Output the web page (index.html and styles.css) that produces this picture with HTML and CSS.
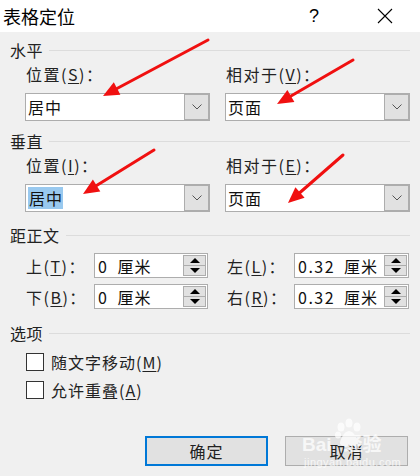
FILE: index.html
```html
<!DOCTYPE html>
<html lang="zh-CN">
<head>
<meta charset="utf-8">
<title>表格定位</title>
<link rel="stylesheet" href="styles.css">
</head>
<body>
<div class="dialog">
  <div class="titlebar">
    <span class="title">表格定位</span>
    <span class="help">?</span>
    <svg class="close" width="16" height="16" viewBox="0 0 16 16"><path d="M1 1L15 15M15 1L1 15" stroke="#000" stroke-width="1.1" fill="none"/></svg>
  </div>
  <div class="content">
    <div class="section-head"><span>水平</span></div>
    <div class="pair">
      <div class="field">
        <div class="label">位置(<u>S</u>)：</div>
        <div class="select"><span class="value">居中</span><span class="select-btn"><svg width="10" height="6" viewBox="0 0 10 6"><path d="M0.5 0.5L5 5L9.5 0.5" stroke="#555" fill="none"/></svg></span></div>
      </div>
      <div class="field">
        <div class="label">相对于(<u>V</u>)：</div>
        <div class="select"><span class="value">页面</span><span class="select-btn"><svg width="10" height="6" viewBox="0 0 10 6"><path d="M0.5 0.5L5 5L9.5 0.5" stroke="#555" fill="none"/></svg></span></div>
      </div>
    </div>
    <div class="section-head sh2"><span>垂直</span></div>
    <div class="pair">
      <div class="field">
        <div class="label">位置(<u>I</u>)：</div>
        <div class="select"><span class="value"><span class="selected">居中</span></span><span class="select-btn"><svg width="10" height="6" viewBox="0 0 10 6"><path d="M0.5 0.5L5 5L9.5 0.5" stroke="#555" fill="none"/></svg></span></div>
      </div>
      <div class="field">
        <div class="label">相对于(<u>E</u>)：</div>
        <div class="select"><span class="value">页面</span><span class="select-btn"><svg width="10" height="6" viewBox="0 0 10 6"><path d="M0.5 0.5L5 5L9.5 0.5" stroke="#555" fill="none"/></svg></span></div>
      </div>
    </div>
    <div class="section-head sh3"><span>距正文</span></div>
    <div class="spin-rows">
      <div class="spin-row">
        <span class="slabel">上(<u>T</u>)：</span>
        <div class="spin l"><span class="value"><span class="num">0</span>厘米</span><span class="spin-btns"><span class="sb"><i class="up"></i></span><span class="sb"><i class="down"></i></span></span></div>
        <span class="slabel r">左(<u>L</u>)：</span>
        <div class="spin r"><span class="value"><span class="num">0.32</span>厘米</span><span class="spin-btns"><span class="sb"><i class="up"></i></span><span class="sb"><i class="down"></i></span></span></div>
      </div>
      <div class="spin-row">
        <span class="slabel">下(<u>B</u>)：</span>
        <div class="spin l"><span class="value"><span class="num">0</span>厘米</span><span class="spin-btns"><span class="sb"><i class="up"></i></span><span class="sb"><i class="down"></i></span></span></div>
        <span class="slabel r">右(<u>R</u>)：</span>
        <div class="spin r"><span class="value"><span class="num">0.32</span>厘米</span><span class="spin-btns"><span class="sb"><i class="up"></i></span><span class="sb"><i class="down"></i></span></span></div>
      </div>
    </div>
    <div class="section-head sh4"><span>选项</span></div>
    <div class="checks">
      <label class="check"><span class="box"></span>随文字移动(<u>M</u>)</label>
      <label class="check"><span class="box"></span>允许重叠(<u>A</u>)</label>
    </div>
    <div class="buttons">
      <span class="btn primary">确定</span>
      <span class="btn">取消</span>
    </div>
  </div>

  <div class="watermark">
    <svg class="paw" width="34" height="30" viewBox="0 0 34 30"><g fill="#fff"><ellipse cx="9" cy="9" rx="3.5" ry="4.5"/><ellipse cx="17" cy="5" rx="3.5" ry="4.5"/><ellipse cx="25" cy="9" rx="3.5" ry="4.5"/><ellipse cx="6" cy="17" rx="3" ry="3.5"/><path d="M17 13c-5 0-9 9-9 12 0 3 4 3 9 3s9 0 9-3c0-3-4-12-9-12z"/></g></svg>
    <span class="wm-big">Bai<span class="wm-gap"></span>经验</span>
    <span class="wm-small">jingyan.baidu.com</span>
  </div>

  <svg class="arrows" width="420" height="476" viewBox="0 0 420 476">
    <g stroke="#f01010" stroke-width="3" stroke-linecap="round" fill="#f01010">
      <line x1="208" y1="40" x2="117" y2="88.5"/>
      <line x1="353" y1="60" x2="291" y2="96"/>
      <line x1="154" y1="150" x2="96.6" y2="185.6"/>
      <line x1="343" y1="155" x2="300" y2="192.5"/>
    </g>
    <g fill="#f01010">
      <polygon points="103,96 113.8,82.3 120.4,94.7"/>
      <polygon points="277,104 287.4,89.9 294.4,102.1"/>
      <polygon points="83,194 92.9,179.6 100.3,191.6"/>
      <polygon points="288,203 295.4,187.2 304.6,197.8"/>
    </g>
  </svg>
</div>
</body>
</html>
```

FILE: styles.css
```css
* { box-sizing: border-box; }
html, body { margin: 0; padding: 0; }
body {
  width: 420px;
  height: 476px;
  overflow: hidden;
  background: #f0f0f0;
  font-family: "Noto Sans CJK SC", "Noto Sans", sans-serif;
  font-size: 16px;
  color: #111;
}
u { text-decoration: underline; text-underline-offset: 2px; }
.dialog { position: relative; width: 420px; height: 476px; }

.titlebar {
  height: 32px;
  background: #fff;
  display: flex;
  align-items: center;
  padding-left: 3px;
}
.title { font-size: 18px; line-height: 20px; color: #000; flex: 1; }
.help { font-size: 18px; line-height: 20px; margin-right: 58px; color: #000; font-family: "Liberation Sans", sans-serif; }
.close { margin-right: 27px; }

.content { padding: 0 10px; }

.section-head {
  height: 20px;
  margin-top: 8px;
  display: flex;
  align-items: center;
  line-height: 20px;
  color: #222;
  letter-spacing: 0.5px;
}
.section-head::after {
  content: "";
  flex: 1;
  height: 1px;
  background: #dcdcdc;
  margin-left: 6px;
}
.sh2 { margin-top: 10px; }
.sh3 { margin-top: 13px; }
.sh4 { margin-top: 14px; }

.pair {
  display: grid;
  grid-template-columns: 185px 185px;
  column-gap: 15px;
  padding-left: 15px;
}
.label { height: 20px; line-height: 20px; margin-top: 4px; padding-left: 1px; color: #222; letter-spacing: 1.5px; }
.select {
  margin-top: 9px;
  height: 28px;
  background: #fff;
  border: 1px solid #adadad;
  display: flex;
  align-items: center;
}
.select .value { flex: 1; padding-left: 2px; line-height: 22px; color: #111; letter-spacing: 1px; }
.selected { background: #99c9ef; display: inline-block; padding: 0 0 0 1px; line-height: 22px; }
.select-btn {
  width: 25px;
  height: 100%;
  background: #e1e1e1;
  border: 1px solid #adadad;
  display: flex;
  align-items: center;
  justify-content: center;
}

.spin-rows { margin-top: 8px; display: flex; flex-direction: column; gap: 6px; }
.spin-row { display: flex; align-items: center; height: 25px; padding-left: 16px; }
.slabel { width: 68px; line-height: 20px; color: #222; letter-spacing: 1.5px; white-space: nowrap; }
.slabel.r { width: 67px; margin-left: 19px; }
.spin {
  height: 25px;
  background: #fff;
  border: 1px solid #adadad;
  display: flex;
  align-items: center;
}
.spin.l { width: 114px; }
.spin.r { width: 115px; }
.spin .value { flex: 1; padding-left: 3px; line-height: 20px; white-space: nowrap; color: #111; letter-spacing: 1px; }
.num { margin-right: 9px; letter-spacing: 1.5px; }
.spin-btns {
  width: 24px;
  height: 100%;
  padding: 1px 1px 1px 0;
  display: flex;
  flex-direction: column;
}
.sb {
  flex: 1;
  background: #e1e1e1;
  border: 1px solid #adadad;
  display: flex;
  align-items: center;
  justify-content: center;
}
.sb + .sb { border-top: none; }
.up, .down { width: 0; height: 0; border-left: 5px solid transparent; border-right: 5px solid transparent; }
.up { border-bottom: 5px solid #000; }
.down { border-top: 5px solid #000; }

.checks { margin-top: 10px; display: flex; flex-direction: column; gap: 10px; padding-left: 16px; }
.check { display: flex; align-items: center; height: 18px; line-height: 20px; color: #222; letter-spacing: 1px; }
.box { width: 18px; height: 18px; border: 1px solid #333; background: #fff; margin-right: 7px; }

.buttons { margin-top: 37px; display: flex; justify-content: flex-end; gap: 17px; padding-right: 2px; }
.btn {
  width: 123px;
  height: 30px;
  background: #e1e1e1;
  border: 1px solid #adadad;
  display: flex;
  align-items: center;
  justify-content: center;
  color: #222;
  letter-spacing: 1px;
}
.btn.primary { border: 2px solid #0078d7; }

.watermark {
  position: absolute;
  left: 302px;
  top: 420px;
  width: 100px;
  height: 50px;
  opacity: 0.75;
  color: #fff;
  pointer-events: none;
}
.paw { position: absolute; left: 30px; top: -2px; }
.wm-big { position: absolute; left: 0; top: 14px; font-family: "Liberation Sans", "Noto Sans CJK SC", sans-serif; font-size: 19px; font-weight: bold; line-height: 22px; white-space: nowrap; }
.wm-gap { display: inline-block; width: 12px; }
.wm-small { position: absolute; left: 2px; top: 36px; font-family: "Liberation Sans", sans-serif; font-size: 11px; letter-spacing: 0.5px; line-height: 13px; white-space: nowrap; }

.arrows { position: absolute; left: 0; top: 0; pointer-events: none; }
```
